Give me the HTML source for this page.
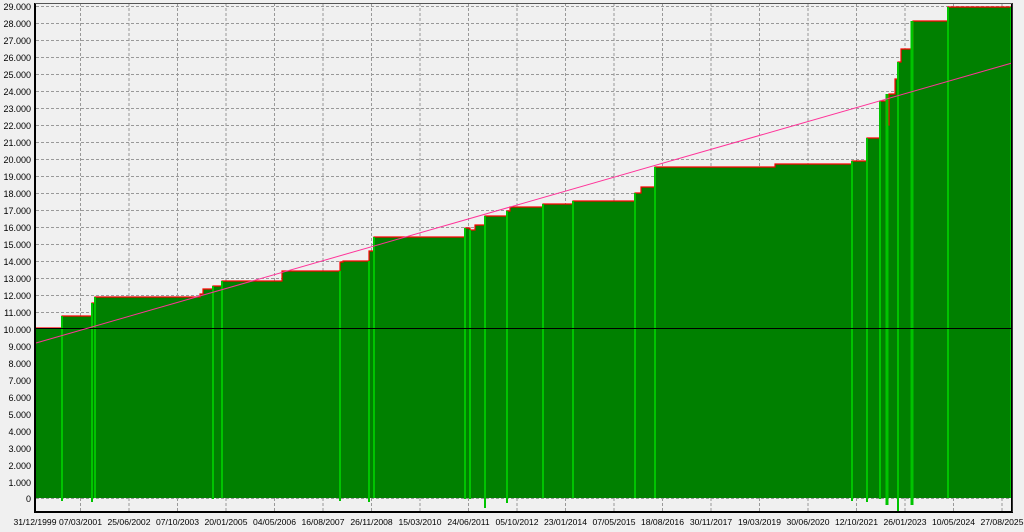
<!DOCTYPE html>
<html><head><meta charset="utf-8"><style>
html,body{margin:0;padding:0;background:#f0f0f0;}
svg{display:block;font-family:"Liberation Sans",sans-serif;font-size:9px;}
</style></head><body>
<svg width="1024" height="532" viewBox="0 0 1024 532">
<rect x="0" y="0" width="1024" height="532" fill="#f0f0f0"/>
<g stroke="#999" stroke-width="1" stroke-dasharray="3,2">
<line x1="36" y1="6.5" x2="1012" y2="6.5"/><line x1="36" y1="23.5" x2="1012" y2="23.5"/><line x1="36" y1="40.5" x2="1012" y2="40.5"/><line x1="36" y1="57.5" x2="1012" y2="57.5"/><line x1="36" y1="74.5" x2="1012" y2="74.5"/><line x1="36" y1="91.5" x2="1012" y2="91.5"/><line x1="36" y1="108.5" x2="1012" y2="108.5"/><line x1="36" y1="125.5" x2="1012" y2="125.5"/><line x1="36" y1="142.5" x2="1012" y2="142.5"/><line x1="36" y1="159.5" x2="1012" y2="159.5"/><line x1="36" y1="176.5" x2="1012" y2="176.5"/><line x1="36" y1="193.5" x2="1012" y2="193.5"/><line x1="36" y1="210.5" x2="1012" y2="210.5"/><line x1="36" y1="227.5" x2="1012" y2="227.5"/><line x1="36" y1="244.5" x2="1012" y2="244.5"/><line x1="36" y1="261.5" x2="1012" y2="261.5"/><line x1="36" y1="278.5" x2="1012" y2="278.5"/><line x1="36" y1="295.5" x2="1012" y2="295.5"/><line x1="36" y1="312.5" x2="1012" y2="312.5"/><line x1="36" y1="329.5" x2="1012" y2="329.5"/><line x1="36" y1="346.5" x2="1012" y2="346.5"/><line x1="36" y1="363.5" x2="1012" y2="363.5"/><line x1="36" y1="380.5" x2="1012" y2="380.5"/><line x1="36" y1="397.5" x2="1012" y2="397.5"/><line x1="36" y1="414.5" x2="1012" y2="414.5"/><line x1="36" y1="431.5" x2="1012" y2="431.5"/><line x1="36" y1="448.5" x2="1012" y2="448.5"/><line x1="36" y1="465.5" x2="1012" y2="465.5"/><line x1="36" y1="482.5" x2="1012" y2="482.5"/><line x1="36" y1="498.5" x2="1012" y2="498.5"/>
<line x1="80.5" y1="3" x2="80.5" y2="512"/><line x1="129" y1="3" x2="129" y2="512"/><line x1="177.5" y1="3" x2="177.5" y2="512"/><line x1="226" y1="3" x2="226" y2="512"/><line x1="274.5" y1="3" x2="274.5" y2="512"/><line x1="323" y1="3" x2="323" y2="512"/><line x1="371.5" y1="3" x2="371.5" y2="512"/><line x1="420" y1="3" x2="420" y2="512"/><line x1="468.5" y1="3" x2="468.5" y2="512"/><line x1="517" y1="3" x2="517" y2="512"/><line x1="565.5" y1="3" x2="565.5" y2="512"/><line x1="614" y1="3" x2="614" y2="512"/><line x1="662.5" y1="3" x2="662.5" y2="512"/><line x1="711" y1="3" x2="711" y2="512"/><line x1="759.5" y1="3" x2="759.5" y2="512"/><line x1="808" y1="3" x2="808" y2="512"/><line x1="856.5" y1="3" x2="856.5" y2="512"/><line x1="905" y1="3" x2="905" y2="512"/><line x1="953.5" y1="3" x2="953.5" y2="512"/><line x1="1002" y1="3" x2="1002" y2="512"/>
</g>
<path d="M36 498 V328 H62 V316 H92 V303 H95 V297 H200 V294 H203 V289 H213 V286 H222 V281 H282 V271 H340 V262 H343 V261 H369 V251 H374 V237 H465 V228 H470 V230 H475 V225 H485 V216 H507 V211 H510 V207 H543 V204 H573 V201 H635 V193 H641 V187 H655 V167 H775 V164 H852 V161 H867 V138 H880 V101 H886 V125 H889 V94 H895 V79 H898 V62 H901 V49 H913 V21 H948 V7 H1012 V498 Z" fill="#008000"/>
<path d="M36 328 H62 V316 H92 V303 H95 V297 H200 V294 H203 V289 H213 V286 H222 V281 H282 V271 H340 V262 H343 V261 H369 V251 H374 V237 H465 V228 H470 V230 H475 V225 H485 V216 H507 V211 H510 V207 H543 V204 H573 V201 H635 V193 H641 V187 H655 V167 H775 V164 H852 V161 H867 V138 H880 V101 H886 V125 H889 V94 H895 V79 H898 V62 H901 V49 H913 V21 H948 V7 H1012" fill="none" stroke="#ff0000" stroke-width="1.2"/>
<g stroke="#00c400" stroke-width="2">
<line x1="62" y1="316" x2="62" y2="501"/><line x1="92" y1="303" x2="92" y2="502"/><line x1="95" y1="297" x2="95" y2="498"/><line x1="213" y1="286" x2="213" y2="499"/><line x1="222" y1="281" x2="222" y2="498"/><line x1="340" y1="271" x2="340" y2="501"/><line x1="369" y1="261" x2="369" y2="502"/><line x1="374" y1="237" x2="374" y2="498"/><line x1="465" y1="228" x2="465" y2="499"/><line x1="470" y1="230" x2="470" y2="499"/><line x1="485" y1="216" x2="485" y2="508"/><line x1="507" y1="211" x2="507" y2="503"/><line x1="543" y1="204" x2="543" y2="498"/><line x1="573" y1="201" x2="573" y2="498"/><line x1="635" y1="193" x2="635" y2="498"/><line x1="655" y1="167" x2="655" y2="498"/><line x1="852" y1="161" x2="852" y2="501"/><line x1="867" y1="138" x2="867" y2="502"/><line x1="880" y1="101" x2="880" y2="499"/><line x1="887" y1="94" x2="887" y2="505" stroke-width="3"/><line x1="898" y1="62" x2="898" y2="511"/><line x1="912" y1="21" x2="912" y2="505" stroke-width="3"/><line x1="948" y1="7" x2="948" y2="498"/><line x1="1011" y1="7" x2="1011" y2="498"/>
</g>
<line x1="36" y1="328.5" x2="1012" y2="328.5" stroke="#000" stroke-width="1"/>
<line x1="36" y1="343" x2="1012" y2="63" stroke="#ff3399" stroke-width="1"/>
<path d="M35 3 V512 H1012 V3" fill="none" stroke="#000" stroke-width="2"/>
<line x1="35" y1="3.5" x2="1012" y2="3.5" stroke="#555" stroke-width="1"/>
<line x1="1012.5" y1="3" x2="1012.5" y2="512" stroke="#333" stroke-width="1"/>
<g fill="#000" text-anchor="end">
<text x="31" y="10">29.000</text><text x="31" y="27">28.000</text><text x="31" y="44">27.000</text><text x="31" y="61">26.000</text><text x="31" y="78">25.000</text><text x="31" y="95">24.000</text><text x="31" y="112">23.000</text><text x="31" y="129">22.000</text><text x="31" y="146">21.000</text><text x="31" y="163">20.000</text><text x="31" y="180">19.000</text><text x="31" y="197">18.000</text><text x="31" y="214">17.000</text><text x="31" y="231">16.000</text><text x="31" y="248">15.000</text><text x="31" y="265">14.000</text><text x="31" y="282">13.000</text><text x="31" y="299">12.000</text><text x="31" y="316">11.000</text><text x="31" y="333">10.000</text><text x="31" y="350">9.000</text><text x="31" y="367">8.000</text><text x="31" y="384">7.000</text><text x="31" y="401">6.000</text><text x="31" y="418">5.000</text><text x="31" y="435">4.000</text><text x="31" y="452">3.000</text><text x="31" y="469">2.000</text><text x="31" y="486">1.000</text><text x="31" y="502">0</text>
</g>
<g fill="#000" text-anchor="middle" font-size="8.6">
<text x="35" y="525">31/12/1999</text><text x="80.5" y="525">07/03/2001</text><text x="129" y="525">25/06/2002</text><text x="177.5" y="525">07/10/2003</text><text x="226" y="525">20/01/2005</text><text x="274.5" y="525">04/05/2006</text><text x="323" y="525">16/08/2007</text><text x="371.5" y="525">26/11/2008</text><text x="420" y="525">15/03/2010</text><text x="468.5" y="525">24/06/2011</text><text x="517" y="525">05/10/2012</text><text x="565.5" y="525">23/01/2014</text><text x="614" y="525">07/05/2015</text><text x="662.5" y="525">18/08/2016</text><text x="711" y="525">30/11/2017</text><text x="759.5" y="525">19/03/2019</text><text x="808" y="525">30/06/2020</text><text x="856.5" y="525">12/10/2021</text><text x="905" y="525">26/01/2023</text><text x="953.5" y="525">10/05/2024</text><text x="1002" y="525">27/08/2025</text>
</g>
</svg>
</body></html>
